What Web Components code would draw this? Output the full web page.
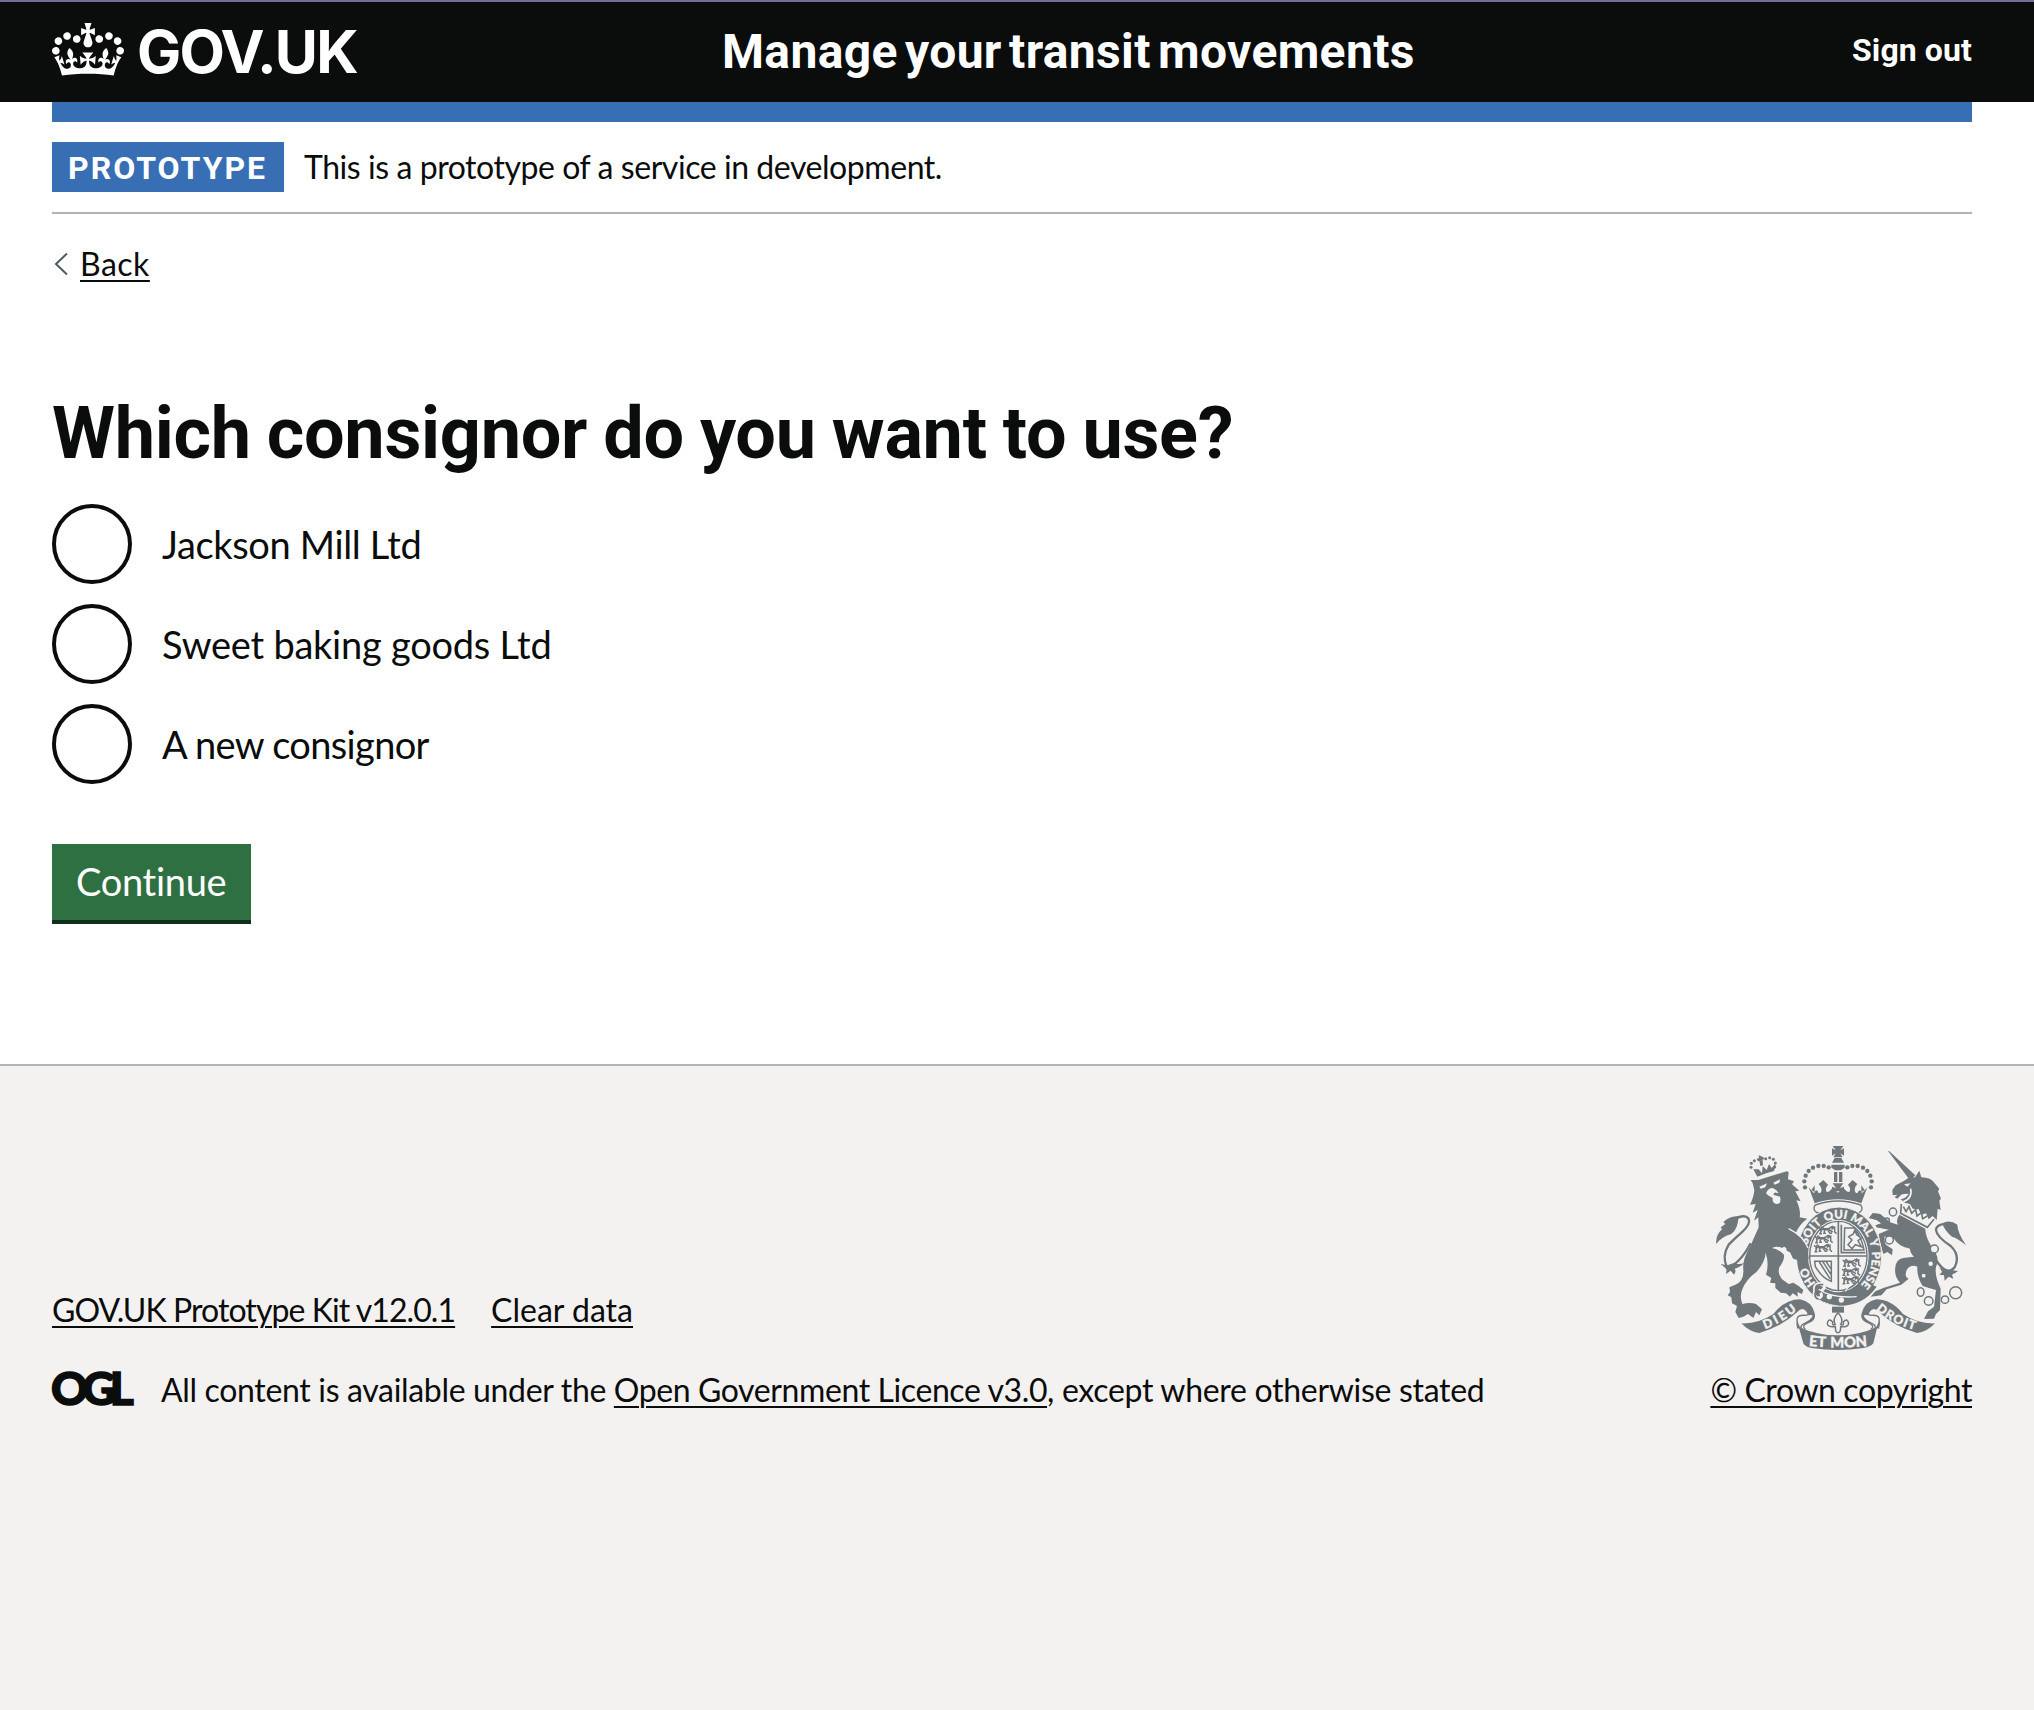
<!DOCTYPE html>
<html lang="en">
<head>
<meta charset="utf-8">
<title>Which consignor do you want to use?</title>
<style>
html,body{margin:0;height:100%}
body{color:#0b0c0c;background:#fff;font-family:Lato,"Liberation Sans",sans-serif;font-size:32px;line-height:40px}
</style>
</head>
<body>
<govuk-page>
  <govuk-header slot="header" service="Manage your transit movements" action="Sign out"></govuk-header>
  <govuk-phase slot="phase" tag="PROTOTYPE">This is a prototype of a service in development.</govuk-phase>
  <govuk-back slot="back">Back</govuk-back>
  <govuk-question legend="Which consignor do you want to use?">
    <govuk-radio style="letter-spacing:-.35px">Jackson Mill Ltd</govuk-radio>
    <govuk-radio style="letter-spacing:-.25px">Sweet baking goods Ltd</govuk-radio>
    <govuk-radio style="letter-spacing:-.65px">A new consignor</govuk-radio>
  </govuk-question>
  <govuk-button>Continue</govuk-button>
  <govuk-footer slot="footer"></govuk-footer>
</govuk-page>
<script>
const define = (name, render) => customElements.define(name, class extends HTMLElement {
  connectedCallback() {
    if (this.shadowRoot) return;
    this.attachShadow({ mode: 'open' }).innerHTML = render(this);
  }
});

define('govuk-page', () => `
<style>
:host{display:flex;flex-direction:column;min-height:100vh}
main{padding:0 62px 0 52px;display:flex;flex-direction:column;align-items:flex-start;height:850px;box-sizing:border-box}
.top{padding:0 62px 0 52px}
.bar{height:20px;background:#386eb4}
.back{margin-top:30px;margin-bottom:110px}
</style>
<slot name="header"></slot>
<div class="top"><div class="bar"></div><slot name="phase"></slot></div>
<main><div class="back"><slot name="back"></slot></div><slot></slot></main>
<slot name="footer"></slot>`);

define('govuk-crown', () => `
<style>:host{display:block;width:72px;height:53px}svg{display:block}</style>
<svg width="72" height="53" viewBox="0 0 132 97" fill="currentColor" aria-hidden="true"><path fill-rule="evenodd" d="M25 30.2c3.5 1.5 7.7-.2 9.1-3.7 1.5-3.6-.2-7.8-3.9-9.2-3.6-1.4-7.6.3-9.1 3.9-1.4 3.5.3 7.5 3.9 9zM9 39.5c3.6 1.5 7.8-.2 9.2-3.7 1.5-3.6-.2-7.8-3.9-9.1-3.6-1.5-7.6.2-9.1 3.8-1.4 3.5.3 7.5 3.8 9zM4.4 57.2c3.5 1.5 7.7-.2 9.1-3.8 1.5-3.6-.2-7.7-3.9-9.1-3.5-1.5-7.6.3-9.1 3.8-1.4 3.5.3 7.6 3.9 9.1zm38.3-21.4c3.5 1.5 7.7-.2 9.1-3.8 1.5-3.6-.2-7.7-3.9-9.1-3.6-1.5-7.6.3-9.1 3.8-1.3 3.6.4 7.7 3.9 9.1zm64.4-5.6c-3.6 1.5-7.8-.2-9.1-3.7-1.5-3.6.2-7.8 3.8-9.2 3.6-1.4 7.7.3 9.2 3.9 1.3 3.5-.4 7.5-3.9 9zm15.9 9.3c-3.6 1.5-7.7-.2-9.1-3.7-1.5-3.6.2-7.8 3.7-9.1 3.6-1.5 7.7.2 9.2 3.8 1.5 3.5-.3 7.5-3.8 9zm4.7 17.7c-3.6 1.5-7.8-.2-9.2-3.8-1.5-3.6.2-7.7 3.9-9.1 3.6-1.5 7.7.3 9.2 3.8 1.3 3.5-.4 7.6-3.9 9.1zM89.3 35.8c-3.6 1.5-7.8-.2-9.2-3.8-1.4-3.6.2-7.7 3.9-9.1 3.6-1.5 7.7.3 9.2 3.8 1.4 3.6-.3 7.7-3.9 9.1zM69.7 17.7l8.9 4.7V9.3l-8.9 2.8c-.2-.3-.5-.6-.9-.9L72.4 0H59.6l3.5 11.2c-.3.3-.6.5-.9.9l-8.8-2.8v13.1l8.8-4.7c.3.3.6.7.9.9l-5 15.4v.1c-.2.8-.4 1.6-.4 2.4 0 4.1 3.1 7.5 7 8.1h.2c.3 0 .7.1 1 .1.4 0 .7 0 1-.1h.2c4-.6 7.1-4.1 7.1-8.1 0-.8-.1-1.7-.4-2.4V34l-5.1-15.4c.4-.2.7-.6 1-.9zM66 92.8c16.9 0 32.8 1.1 47.1 3.2 4-16.9 8.9-26.7 14-33.5l-9.6-3.4c1 4.9 1.1 7.2 0 10.2-1.5-1.4-3-4.3-4.2-8.7L108.6 76c2.8-2 5-3.2 7.5-3.3-4.4 9.4-10 11.9-13.6 11.2-4.3-.8-6.3-4.6-5.6-7.9 1-4.7 5.7-5.9 8-.5 4.3-8.7-3-11.4-7.6-8.8 7.1-7.2 7.9-13.5 2.1-21.1-8 6.1-8.1 12.3-4.5 20.8-4.7-5.4-12.1-2.5-9.5 6.2 3.4-5.2 7.9-2 7.2 3.1-.6 4.3-6.4 7.8-13.5 7.2-10.3-.9-10.9-8-11.2-13.8 2.5-.5 7.1 1.8 11 7.3L80.2 60c-4.1 4.4-8 5.3-12.3 5.4 1.4-4.4 8-11.6 8-11.6H55.5s6.4 7.2 7.9 11.6c-4.2-.1-8-1-12.3-5.4l1.4 16.4c3.9-5.5 8.5-7.7 10.9-7.3-.3 5.8-.9 12.8-11.1 13.8-7.2.6-12.9-2.9-13.5-7.2-.7-5 3.8-8.3 7.1-3.1 2.7-8.7-4.6-11.6-9.4-6.2 3.7-8.5 3.6-14.7-4.6-20.8-5.8 7.6-5 13.9 2.2 21.1-4.7-2.6-11.9.1-7.7 8.8 2.3-5.5 7.1-4.2 8.1.5.7 3.3-1.3 7.1-5.7 7.9-3.5.7-9-1.8-13.5-11.2 2.5.1 4.7 1.3 7.5 3.3l-4.7-15.4c-1.2 4.4-2.7 7.2-4.3 8.7-1.1-3-.9-5.3 0-10.2l-9.5 3.4c5 6.9 9.9 16.7 14 33.5 14.8-2.1 30.8-3.2 47.7-3.2z"/></svg>`);

define('govuk-header', el => `
<style>
:host{display:grid;grid-template-columns:670px 1fr auto;align-items:center;height:100px;padding:0 62px 0 52px;border-top:2px solid #6f6e93;background:#0b0c0c;color:#fff;font-family:Roboto,sans-serif;font-weight:700}
.logo{display:flex;align-items:center;gap:13px}
govuk-crown{margin-bottom:5px}
.name{font:700 59px/60px Inter,sans-serif;letter-spacing:-1.9px}
.service{font-size:48px;line-height:60px;letter-spacing:.35px;word-spacing:-5px}
.action{letter-spacing:.1px;padding-bottom:4px}
</style>
<div class="logo"><govuk-crown></govuk-crown><span class="name">GOV.UK</span></div>
<div class="service">${el.getAttribute('service')}</div>
<div class="action">${el.getAttribute('action')}</div>`);

define('govuk-phase', el => `
<style>
:host{display:flex;gap:20px;padding:20px 0;border-bottom:2px solid #b1b4b6}
.tag{width:201px;height:48px;padding:2px 15px 0 16px;line-height:48px;background:#386eb4;color:#fff;font-family:Roboto,sans-serif;font-weight:700;letter-spacing:2px}
.text{line-height:50px;letter-spacing:-.44px}
</style>
<strong class="tag">${el.getAttribute('tag')}</strong><span class="text"><slot></slot></span>`);

define('govuk-back', () => `
<style>
:host{display:flex;align-items:center;gap:12px;padding-left:2px;letter-spacing:.5px}
a{text-decoration:underline;text-decoration-thickness:2px;text-underline-offset:4px}
svg{display:block}
</style>
<svg width="14" height="24" viewBox="0 0 14 24" fill="none" stroke="#505a5f" stroke-width="2"><path d="M13 1.500 2 12l11 10.500"/></svg><a><slot></slot></a>`);

define('govuk-question', el => `
<style>
:host{display:block}
h1{margin:0 0 30px;font:700 72px/80px Roboto,sans-serif;letter-spacing:-.3px;word-spacing:-1.5px}
.options{display:flex;flex-direction:column;gap:20px}
</style>
<h1>${el.getAttribute('legend')}</h1>
<div class="options"><slot></slot></div>`);

define('govuk-radio', () => `
<style>
:host{display:flex;align-items:center;gap:30px;height:80px;font-size:38px}
i{width:80px;height:80px;box-sizing:border-box;border:4px solid #0b0c0c;border-radius:50%}
</style>
<i></i><label><slot></slot></label>`);

define('govuk-button', () => `
<style>
:host{display:block;box-sizing:border-box;width:199px;margin-top:60px;padding:0 0 2px 24px;background:#2f7043;box-shadow:0 4px 0 #122f1e;color:#fff;font-size:38px;line-height:74px;letter-spacing:-.3px}
</style><slot></slot>`);

define('royal-arms', () => {
  const g = '#6f777b', w = '#f3f2f1';
  const dots = [[345,172],[343,154],[347,137],[356,123],[369,113],[385,108],[401,108],[416,112]];
  const pearls = dots.map(([x,y]) => `<circle cx="${x}" cy="${y}" r="6.500"/><circle cx="${888-x}" cy="${y}" r="6.500"/>`).join('');
  const lion = (x,y) => `<path transform="translate(${x} ${y})" fill="none" stroke="${g}" stroke-width="4.500" d="M0 2l6 5 4-6 6 5h14l8-5 4 3M4 12l8-4 20 2 10 6M8 12l-4 9h6M18 10l-2 10h6M28 12l6 8h6M38 8l10-6v14l6 5M46 2l-6-4"/>`;
  const ribbon = `<path d="M154 580Q205 582 250 552Q285 508 330 508Q365 514 374 550Q378 572 352 578Q330 584 332 594L322 596Q312 565 336 560Q358 556 350 546Q338 528 322 546Q275 590 208 609Q178 606 154 580Z"/><path d="M372 552Q378 572 350 580Q334 588 346 598" fill="none" stroke="${g}" stroke-width="4"/><path fill="${w}" stroke="${g}" stroke-width="4" d="M328 592Q308 552 346 556Q376 548 368 562Q360 574 344 580Q332 584 333 594Z"/>`;
  return `
<style>:host{display:block;width:250px;height:204px}svg{display:block;overflow:visible}text{font-family:Lato,sans-serif;font-weight:900;line-height:1}</style>
<svg width="250" height="204" viewBox="78 48 750 612" fill="${g}">
<path d="M188 160L182 150L205 150L290 124L296 126L294 148L312 154L306 163L328 182L316 184L332 214L319 211Q333 240 329 262L352 266Q328 282 316 312Q340 328 352 352L356 382L348 402L338 394L328 404L322 390L310 386L306 370L290 362L288 346L276 354Q262 347 246 354Q268 358 282 374Q284 390 268 412Q262 432 276 448L296 462L310 458L326 468L340 480L336 492L322 486L324 500L308 490L300 500L288 490L272 488L256 474L256 460L240 458L244 444L228 434Q238 402 227 368Q226 395 200 425Q168 448 157 478Q148 500 157 522Q180 516 198 522L216 538L208 556L198 546L190 564L174 552L160 560L146 564L136 546L141 528L126 520L124 502L113 496L120 486L118 472L136 464Q162 455 160 420Q156 390 180 350L206 292L205 262L192 272L203 240L188 248L197 222L180 224Q192 200 193 180Z"/>
<path fill="${w}" d="M208 170L231 160L226 172L212 176ZM250 158L270 148L268 158L254 164ZM228 190Q234 174 248 174Q260 178 266 190L258 188Q252 186 250 194L270 200Q276 222 258 222Q246 218 248 204L234 196Z"/>
<path d="M190 118l12 22 50-16 6-26-13 16-8-12-7 18-12-12-2 22-10-12z"/><g><circle cx="183" cy="112" r="4.500"/><circle cx="184" cy="100" r="4.500"/><circle cx="193" cy="92" r="4.500"/><circle cx="227" cy="86" r="4.500"/><circle cx="239" cy="83" r="4.500"/><circle cx="250" cy="88" r="4.500"/><circle cx="256" cy="99" r="4.500"/><circle cx="254" cy="111" r="4.500"/><path d="M206 76l9 3 1 8-9-2zM200 86l20-6 2 8-18 6zM208 92l10-2 1 16-8 2z"/></g>
<path d="M198 146Q226 130 258 124" fill="none" stroke="${w}" stroke-width="4"/>
<g fill="none" stroke="${g}" stroke-width="7"><path d="M112 414Q94 380 116 344Q135 324 152 310Q186 280 174 264Q160 252 134 268M108 416Q150 402 182 340"/></g>
<path d="M146 258Q118 258 100 276L106 282L92 292L96 298Q76 316 79 342Q92 322 124 312Q144 298 146 258ZM92 402L112 406L130 400Q146 404 162 400Q152 412 134 416Q140 424 132 434L122 422L108 432L110 418Z"/>
<path d="M594 63L598 64L676 136L660 152L652 140ZM607 180L617 166L640 154L655 144L675 142L688 122L694 142Q724 142 734 160L748 176L744 184L753 206L748 212L752 240L743 236L740 270L728 258L716 268L708 250L694 254L686 238L668 236L660 222L644 218L632 208Q646 206 656 192Q636 190 630 198L622 206L614 202L622 194L608 196Z"/>
<path d="M662 176Q668 206 640 215" fill="none" stroke="${w}" stroke-width="5"/><path fill="${w}" d="M642 163l20-3-10 10z"/>
<path d="M634 222L632 250L712 292L732 268M640 230l8 15 9-15 8 20 12-12 4 20 13-10 4 18 14-8" fill="none" stroke="${g}" stroke-width="5"/>
<path d="M628 254L706 296Q706 320 724 348Q752 382 738 410Q734 432 746 462L752 476L750 540L738 552L732 566L702 567L714 544L732 530L738 480Q716 474 698 468Q680 440 682 410Q662 402 650 420Q642 440 656 446L634 464L590 478L574 496L542 500L556 484L580 474L630 458Q612 440 616 412Q618 388 640 384L672 380Q660 368 660 356Q626 350 612 326L600 332L584 318Q582 340 590 346L608 358L606 376L592 366L580 372L572 344L566 312L600 298L560 292L556 286L574 280L560 270L540 264L548 250L570 252L598 276L624 284Q616 272 628 254Z"/>
<path d="M738 390Q770 440 794 412Q812 376 782 348Q740 320 738 300Q738 282 776 280" fill="none" stroke="${g}" stroke-width="7"/>
<g fill="${w}" stroke="${g}" stroke-width="4.500"><ellipse cx="609" cy="246" rx="11" ry="12"/><circle cx="590" cy="272" r="8"/><circle cx="598" cy="330" r="12"/><circle cx="733" cy="357" r="12"/><circle cx="722" cy="401" r="9"/><circle cx="701" cy="437" r="8"/><ellipse cx="692" cy="486" rx="10" ry="13"/><circle cx="716" cy="513" r="13"/><circle cx="765" cy="509" r="11"/><circle cx="797" cy="488" r="18"/></g>
<path d="M756 286Q766 278 764 276Q784 270 802 284Q802 306 828 346Q806 326 786 320Q768 306 758 284ZM748 412Q766 428 786 420L804 424L786 434L790 446L776 440L764 452L762 436L748 434L756 426Z"/>
<g>${pearls}
<path d="M428 48h32l-9 13 11-6v22l-11-7 7 12h-28l7-12-11 7V55l11 6zM434 84h20l8 14h-36zM424 104h40v9l-12 8h-16l-12-8zM432 126h10v30h-10zM447 126h10v30h-10z"/>
<path d="M356 172L372 190Q380 172 386 190Q400 188 392 170L386 162L400 150L414 164L408 174Q406 190 418 184L428 174L444 188L460 174L470 184Q482 190 480 174L474 164L488 150L502 162L496 170Q490 188 502 190Q510 172 516 190L532 172L514 220Q444 196 374 220Z"/><path d="M428 160h32l-10 14 12-4v20l-14-6h-8l-14 6v-20l12 4zM364 180l10-14v20zM524 180l-10-14v20z"/>
</g>
<path d="M376 225Q444 201 512 225Q522 238 508 248L380 248Q366 238 376 225Z" fill="${w}" stroke="${g}" stroke-width="4"/>
<ellipse cx="447" cy="379" rx="128" ry="148" stroke="${w}" stroke-width="3"/>
<ellipse cx="445" cy="378" rx="91" ry="109" fill="${w}"/><ellipse cx="445" cy="378" rx="86" ry="104" fill="${w}" stroke="${g}" stroke-width="4"/>
<path d="M445 274v208M359 378h172M454 284v84h72" fill="none" stroke="${g}" stroke-width="5"/>
${lion(386,290)}${lion(374,317)}${lion(372,344)}${lion(458,388)}${lion(456,415)}${lion(456,440)}
<path d="M464 294h28q22 24 30 66h-60zM474 344l12-14-10-10 14-8 4-12 6 14 14 10-10 8 10 18-18-6-10 12z" fill="none" stroke="${g}" stroke-width="4.500"/>
<path d="M374 394h50v60q-26-8-48-44zM388 396l32 50M398 394l24 38M408 394l16 24" fill="none" stroke="${g}" stroke-width="4.500"/>
<path d="M460 484Q500 478 520 452L560 470Q520 528 447 527Q404 520 376 500L392 478Q425 500 460 484Z"/>
<path d="M386 478Q424 506 500 500M466 484L478 466" fill="none" stroke="${w}" stroke-width="4"/>
<circle cx="418" cy="500" r="8" fill="${w}"/><circle cx="454" cy="510" r="8" fill="${w}"/>
<path d="M398 462Q370 458 374 480Q368 500 384 504M398 462Q410 474 394 482M384 504Q400 502 392 488" fill="none" stroke="${w}" stroke-width="9"/><path d="M400 464Q374 460 377 482Q370 502 386 508" fill="none" stroke="${g}" stroke-width="5"/>
<path id="garter" d="M447 493A99 114 0 0 1 447 265A99 114 0 0 1 447 493" fill="none"/>
<g fill="${w}" stroke="${w}" stroke-width="1" font-size="35" text-anchor="middle">
<text><textPath href="#garter" startOffset="16%">HO</textPath></text>
<text><textPath href="#garter" startOffset="36%">SOIT</textPath></text>
<text><textPath href="#garter" startOffset="48.500%">QUI</textPath></text>
<text><textPath href="#garter" startOffset="60.500%">MAL</textPath></text>
<text><textPath href="#garter" startOffset="69.500%">Y</textPath></text>
<text><textPath href="#garter" startOffset="81%">PENSE</textPath></text></g>
<path d="M296 296Q350 320 356 384L348 404L338 394L328 404L322 390L308 384Q296 350 270 346Z"/><path d="M296 296Q340 318 354 354" fill="none" stroke="${w}" stroke-width="4"/>
<path d="M536 264L548 250L570 252L600 276L600 300L560 292L574 280L560 270Z"/>
<path d="M426 530h36v18h-36z"/><path d="M444 548Q462 566 452 584Q462 588 460 576Q472 562 476 580Q474 590 462 590L452 590Q452 608 444 608Q436 608 436 590L426 590Q412 590 412 580Q416 562 428 576Q426 588 436 584Q426 566 444 548Z" fill="${w}" stroke="${g}" stroke-width="4.500"/>
<g>${ribbon}</g><g transform="matrix(-1 0 0 1 889 0)">${ribbon}</g>
<path d="M326 590Q380 616 444 616Q508 616 562 590L550 640Q544 650 520 654Q444 666 364 654Q344 650 340 640Z"/>
<path id="rl" d="M216 600Q275 582 328 534" fill="none"/><path id="rr" d="M552 534Q604 582 680 602" fill="none"/><path id="rc" d="M345 647Q444 658 543 647" fill="none"/>
<g fill="${w}" stroke="${w}" stroke-width="1" text-anchor="middle"><text font-size="37"><textPath href="#rl" startOffset="50%" textLength="112">DIEU</textPath></text><text font-size="37"><textPath href="#rr" startOffset="50%" textLength="132">DROIT</textPath></text><text font-size="44" word-spacing="5"><textPath href="#rc" startOffset="50%" textLength="176">ET MON</textPath></text></g>
</svg>`;
});

define('govuk-footer', () => `
<style>
:host{display:flex;flex:1;align-items:flex-start;border-top:2px solid #b1b4b6;background:#f3f2f1}
.row{flex:1;display:flex;justify-content:space-between;align-items:flex-end;padding:80px 62px 0 52px}
.meta,.crown{display:flex;flex-direction:column}
.meta{gap:40px}.crown{align-items:center;gap:20px}
.links{display:flex;gap:36px}
a{text-decoration:underline;text-decoration-thickness:2px;text-underline-offset:4px}
.licence{display:flex;align-items:center;height:40px}
.ogl{width:108px;font:900 46px/34px Lato,sans-serif;letter-spacing:-6px;-webkit-text-stroke:1.500px #0b0c0c;margin-bottom:5px;margin-left:-1px}
</style>
<div class="row">
<div class="meta">
<div class="links"><a style="letter-spacing:-.93px">GOV.UK Prototype Kit v12.0.1</a><a>Clear data</a></div>
<div class="licence"><span class="ogl">OGL</span><span style="padding-left:2px"><span style="letter-spacing:-.33px">All content is available under the </span><a style="letter-spacing:-.4px">Open Government Licence v3.0</a><span style="letter-spacing:-.3px">, except where otherwise stated</span></span></div>
</div>
<div class="crown"><royal-arms></royal-arms><a style="letter-spacing:-.4px">© Crown copyright</a></div>
</div>`);
</script>
</body>
</html>
